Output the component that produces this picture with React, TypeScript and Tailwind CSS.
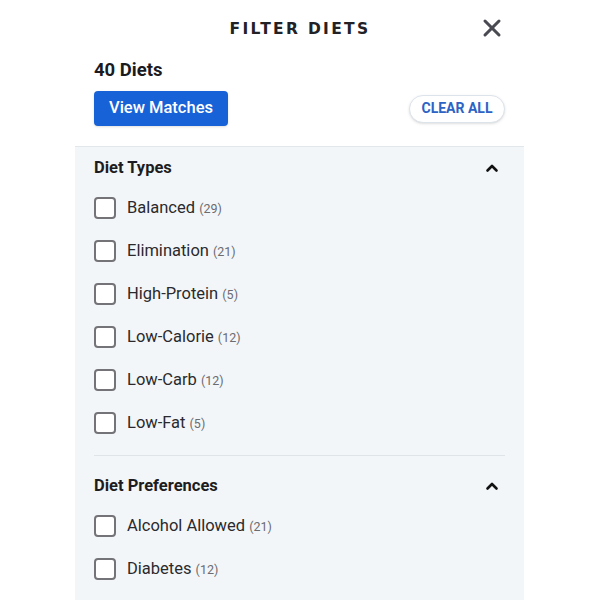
import { X } from "lucide-react";

type Item = { label: string; count: number };

const dietTypes: Item[] = [
  { label: "Balanced", count: 29 },
  { label: "Elimination", count: 21 },
  { label: "High-Protein", count: 5 },
  { label: "Low-Calorie", count: 12 },
  { label: "Low-Carb", count: 12 },
  { label: "Low-Fat", count: 5 },
];

const dietPrefs: Item[] = [
  { label: "Alcohol Allowed", count: 21 },
  { label: "Diabetes", count: 12 },
  { label: "Gluten-Free", count: 9 },
];

function Chevron() {
  return (
    <svg width="14" height="10" viewBox="0 0 14 10" className="text-[#111]">
      <path d="M2.5 7.5 L7 3 L11.5 7.5" fill="none" stroke="currentColor" strokeWidth="2.6" strokeLinecap="round" strokeLinejoin="round" />
    </svg>
  );
}

function Row({ item }: { item: Item }) {
  return (
    <label className="flex items-center h-[43px] gap-[11px] cursor-pointer">
      <span className="w-[22px] h-[22px] rounded-[4px] border-2 border-[#737378] bg-white shrink-0" />
      <span className="text-[16.5px] text-[#2a2a2e] leading-none mt-[2px]">
        {item.label} <span className="text-[12.5px] text-[#6b6b70]">({item.count})</span>
      </span>
    </label>
  );
}

function Section({ title, items }: { title: string; items: Item[] }) {
  return (
    <div>
      <div className="flex items-center justify-between h-[24px] pr-[6px]">
        <span className="text-[16.5px] font-bold text-[#1d1d21]">{title}</span>
        <Chevron />
      </div>
      <div className="mt-[6px]">
        {items.map((it) => (
          <Row key={it.label} item={it} />
        ))}
      </div>
    </div>
  );
}

export default function App() {
  return (
    <div className="w-[600px] h-[600px] bg-white overflow-hidden" style={{ fontFamily: "Roboto, 'Liberation Sans', sans-serif" }}>
      <div className="ml-[75px] w-[449px]">
        {/* header */}
        <div className="flex items-center justify-between h-[58px] pl-[19px] pr-[18px]">
          <span className="w-[24px]" />
          <h1 className="text-[15.5px] font-bold tracking-[0.15em] text-[#222226] mt-[2px] ml-[4px]" style={{ fontFamily: "'DejaVu Sans', sans-serif" }}>
            FILTER DIETS
          </h1>
          <button className="text-[#4a4a52] -mt-[3px]" title="Close">
            <X className="w-[28px] h-[28px]" strokeWidth={2.6} />
          </button>
        </div>

        <div className="px-[19px]">
          <div className="text-[18.5px] font-bold text-[#1b1b1f] leading-[24px]">40 Diets</div>
          <div className="flex items-center justify-between mt-[9px]">
            <button className="w-[134px] h-[35px] rounded-[4px] bg-[#1862d8] text-white text-[16.5px] font-medium shadow-sm">
              View Matches
            </button>
            <button className="w-[96px] h-[28px] rounded-full border border-[#dde3ea] text-[#2d63c4] text-[14px] font-bold bg-white shadow-sm">
              CLEAR ALL
            </button>
          </div>
        </div>

        {/* filters */}
        <div className="mt-[20px] bg-[#f3f6f8] border-t border-[#e1e7eb] px-[19px] pt-[9px] h-[460px]">
          <Section title="Diet Types" items={dietTypes} />
          <div className="border-t border-[#dfe4e8] mt-[11px]" />
          <div className="pt-[18px]">
            <Section title="Diet Preferences" items={dietPrefs} />
          </div>
        </div>
      </div>
    </div>
  );
}
